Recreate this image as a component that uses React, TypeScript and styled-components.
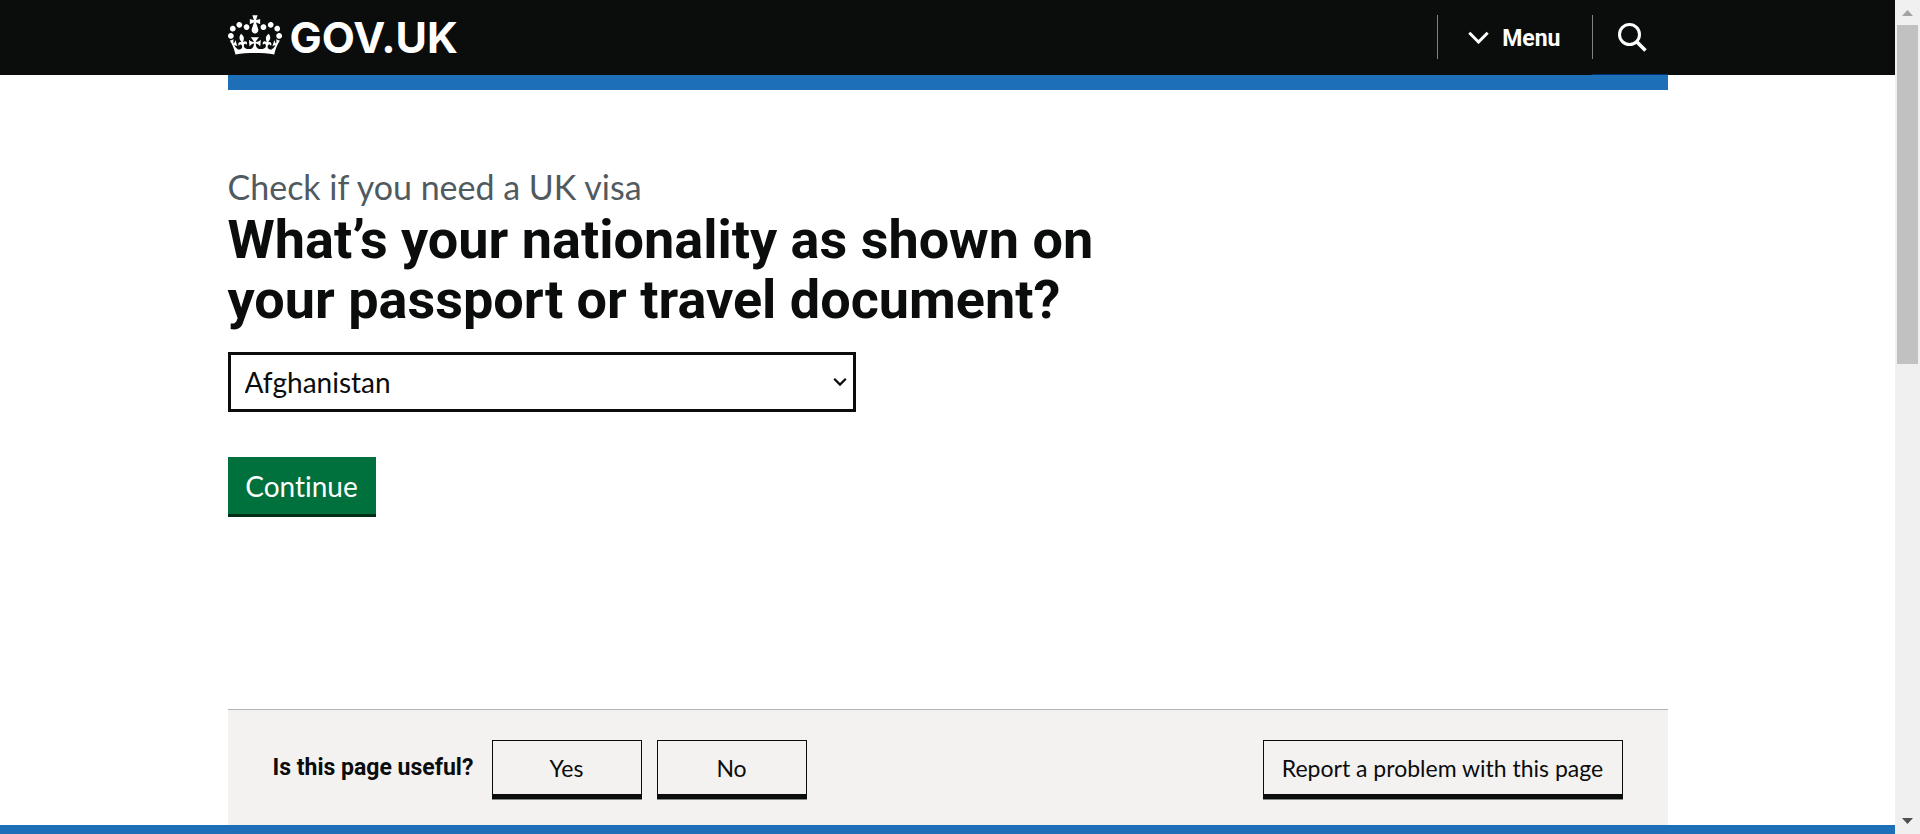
import React from "react";
import styled, { createGlobalStyle } from "styled-components";

const color = {
  ink: "#0b0c0c",
  blue: "#1d70b8",
  darkBlue: "#003078",
  green: "#00703c",
  greenShadow: "#002d18",
  grey: "#f3f2f1",
  midGrey: "#b1b4b6",
  secondary: "#505a5f",
};

const light = `Lato, "Open Sans", sans-serif`;
const bold = `Roboto, Arial, sans-serif`;

const GlobalStyle = createGlobalStyle`
  *, *::before, *::after { box-sizing: border-box; }
  body {
    margin: 0;
    background: #fff;
    color: ${color.ink};
    font-family: ${light};
    font-variant-ligatures: none;
  }
  button, select { font: inherit; color: inherit; border-radius: 0; }
`;

const Screen = styled.div`
  display: grid;
  grid-template-columns: minmax(0, 1fr) 25px;
  min-height: 100vh;
`;

const Page = styled.div`
  display: flex;
  flex-direction: column;
`;

const Container = styled.div`
  width: 100%;
  max-width: 1440px;
  margin: 0 auto;
`;

const Header = styled.header`
  background: ${color.ink};
  color: #fff;
`;

const HeaderInner = styled(Container)`
  display: flex;
  justify-content: space-between;
  height: 75px;
`;

const Logo = styled.a`
  display: flex;
  align-items: center;
  gap: 8px;
  padding-bottom: 5px;
  color: #fff;
  text-decoration: none;
  font: 700 43px/45px Inter, Arial, sans-serif;

  svg { display: block; fill: currentColor; }
  span { padding-top: 4px; }
`;

const HeaderNav = styled.nav`
  display: flex;
`;

const NavButton = styled.button<{ $underlined?: boolean }>`
  display: flex;
  align-items: center;
  padding: 0;
  border: 0;
  border-bottom: 1px solid ${(p) => (p.$underlined ? color.darkBlue : "transparent")};
  background: none;
  color: #fff;
  font: 700 23px/30px ${bold};
  cursor: pointer;

  &::before {
    content: "";
    width: 1px;
    height: 44px;
    background: #7f8283;
  }
  svg { display: block; fill: none; stroke: currentColor; }
  span { padding-top: 3px; }
`;

const MenuButton = styled(NavButton)`
  gap: 13px;
  padding-right: 31px;

  &::before { margin-right: 17px; }
`;

const SearchButton = styled(NavButton)`
  gap: 25px;
  padding-right: 21px;
`;

const BlueBar = styled(Container)`
  height: 15px;
  background: ${color.blue};
`;

const Main = styled.main`
  padding: 70px 0 195px;
`;

const Question = styled.form`
  display: flex;
  flex-direction: column;
  align-items: flex-start;
`;

const Caption = styled.span`
  padding: 4px 0 1px;
  color: ${color.secondary};
  font-size: 34px;
  line-height: 45px;
`;

const Heading = styled.h1`
  max-width: 920px;
  margin: 0 0 22px;
  font: 700 54px/60px ${bold};
`;

const SelectWrap = styled.div`
  display: grid;
  align-items: center;
  width: 628px;
  max-width: 100%;
  margin-bottom: 45px;

  > * { grid-area: 1 / 1; }
  svg {
    justify-self: end;
    margin-right: 9px;
    fill: none;
    stroke: ${color.ink};
    pointer-events: none;
  }
`;

const Select = styled.select`
  appearance: none;
  width: 100%;
  height: 60px;
  padding: 0 40px 0 14px;
  border: 3px solid ${color.ink};
  background: #fff;
  font-size: 28px;
`;

const ContinueButton = styled.button`
  min-width: 148px;
  height: 57px;
  padding: 0 16px;
  border: 0;
  background: ${color.green};
  box-shadow: 0 3px 0 ${color.greenShadow};
  color: #fff;
  font-size: 28px;
  line-height: 30px;
  cursor: pointer;
`;

const Feedback = styled(Container)`
  display: flex;
  align-items: flex-start;
  justify-content: space-between;
  flex: 1;
  padding: 30px 45px 26px;
  border-top: 1px solid ${color.midGrey};
  background: ${color.grey};
`;

const Useful = styled.div`
  display: flex;
  align-items: center;
  gap: 15px;
`;

const UsefulTitle = styled.h2`
  min-width: 204px;
  margin: 0;
  padding-bottom: 4px;
  font: 700 23px/30px ${bold};
`;

const FeedbackButton = styled.button<{ $wide?: boolean }>`
  width: ${(p) => (p.$wide ? "360px" : "150px")};
  height: 59px;
  padding: 0;
  border: 1px solid ${color.ink};
  border-bottom-width: 5px;
  background: ${color.grey};
  box-shadow: 0 1px 0 #858686;
  font-size: 23px;
  line-height: 30px;
  cursor: pointer;
`;

const Footer = styled.footer`
  height: 9px;
  background: ${color.blue};
`;

const Scrollbar = styled.div`
  display: flex;
  flex-direction: column;
  align-items: center;
  gap: 5px;
  padding: 10px 0;
  background: #f0f0f0;
`;

const Arrow = styled.svg<{ $active?: boolean }>`
  display: block;
  fill: ${(p) => (p.$active ? "#505050" : "#a3a3a3")};
`;

const Track = styled.div`
  flex: 1;
  width: 21px;
  padding-top: 4px;
`;

const Thumb = styled.div`
  height: 43%;
  background: #c1c1c1;
`;

const Crown = () => (
  <svg width="54" height="40" viewBox="0 0 132 97" aria-hidden="true">
    <path d="M25 30.2c3.5 1.5 7.7-.2 9.1-3.7 1.5-3.6-.2-7.8-3.9-9.2-3.6-1.4-7.6.3-9.1 3.9-1.4 3.5.3 7.5 3.9 9zM9 39.5c3.6 1.5 7.8-.2 9.2-3.7 1.5-3.6-.2-7.8-3.9-9.1-3.6-1.5-7.6.2-9.1 3.8-1.4 3.5.3 7.5 3.8 9zM4.4 57.2c3.5 1.5 7.7-.2 9.1-3.8 1.5-3.6-.2-7.7-3.9-9.1-3.5-1.5-7.6.3-9.1 3.8-1.4 3.5.3 7.6 3.9 9.1zm38.3-21.4c3.5 1.5 7.7-.2 9.1-3.8 1.5-3.6-.2-7.7-3.9-9.1-3.6-1.5-7.6.3-9.1 3.8-1.3 3.6.4 7.7 3.9 9.1zm64.4-5.6c-3.6 1.5-7.8-.2-9.1-3.7-1.5-3.6.2-7.8 3.8-9.2 3.6-1.4 7.7.3 9.2 3.9 1.3 3.5-.4 7.5-3.9 9zm15.9 9.3c-3.6 1.5-7.7-.2-9.1-3.7-1.5-3.6.2-7.8 3.7-9.1 3.6-1.5 7.7.2 9.2 3.8 1.5 3.5-.3 7.5-3.8 9zm4.7 17.7c-3.6 1.5-7.8-.2-9.2-3.8-1.5-3.6.2-7.7 3.9-9.1 3.6-1.5 7.7.3 9.2 3.8 1.3 3.5-.4 7.6-3.9 9.1zM89.3 35.8c-3.6 1.5-7.8-.2-9.2-3.8-1.4-3.6.2-7.7 3.9-9.1 3.6-1.5 7.7.3 9.2 3.8 1.4 3.6-.3 7.7-3.9 9.1zM69.7 17.7l8.9 4.7V9.3l-8.9 2.8c-.2-.3-.5-.6-.9-.9L72.4 0H59.6l3.5 11.2c-.3.3-.6.5-.9.9l-8.8-2.8v13.1l8.8-4.7c.3.3.6.7.9.9l-5 15.4v.1c-.2.8-.4 1.6-.4 2.4 0 4.1 3.1 7.5 7 8.1h.2c.3 0 .7.1 1 .1.4 0 .7 0 1-.1h.2c4-.6 7.1-4.1 7.1-8.1 0-.8-.1-1.7-.4-2.4V34l-5.1-15.4c.4-.2.7-.6 1-.9zM66 92.8c16.9 0 32.8 1.1 47.1 3.2 4-16.9 8.9-26.7 14-33.5l-9.6-3.4c1 4.9 1.1 7.2 0 10.2-1.5-1.4-3-4.3-4.2-8.7L108.6 76c2.8-2 5-3.2 7.5-3.3-4.4 9.4-10 11.9-13.6 11.2-4.3-.8-6.3-4.6-5.6-7.9 1-4.7 5.7-5.9 8-.5 4.3-8.7-3-11.4-7.6-8.8 7.1-7.2 7.9-13.5 2.1-21.1-8 6.1-8.1 12.3-4.5 20.8-4.7-5.4-12.1-2.5-9.5 6.2 3.4-5.2 7.9-2 7.2 3.1-.6 4.3-6.4 7.8-13.5 7.2-10.3-.9-10.9-8-11.2-13.8 2.5-.5 7.1 1.8 11 7.3L80.2 60c-4.1 4.4-8 5.3-12.3 5.4 1.4-4.4 8-11.6 8-11.6H55.5s6.4 7.2 7.9 11.6c-4.2-.1-8-1-12.3-5.4l1.4 16.4c3.9-5.5 8.5-7.7 10.9-7.3-.3 5.8-.9 12.8-11.1 13.8-7.2.6-12.9-2.9-13.5-7.2-.7-5 3.8-8.3 7.1-3.1 2.7-8.7-4.6-11.6-9.4-6.2 3.7-8.5 3.6-14.7-4.6-20.8-5.8 7.6-5 13.9 2.2 21.1-4.7-2.6-11.9.1-7.7 8.8 2.3-5.5 7.1-4.2 8.1.5.7 3.3-1.3 7.1-5.7 7.9-3.5.7-9-1.8-13.5-11.2 2.5.1 4.7 1.3 7.5 3.3l-4.7-15.4c-1.2 4.4-2.7 7.2-4.3 8.7-1.1-3-.9-5.3 0-10.2l-9.5 3.4c5 6.9 9.9 16.7 14 33.5 14.8-2.1 30.8-3.2 47.7-3.2z" />
  </svg>
);

export default function App() {
  return (
    <>
      <GlobalStyle />
      <Screen>
        <Page>
          <Header>
            <HeaderInner>
              <Logo href="#">
                <Crown />
                <span>GOV.UK</span>
              </Logo>
              <HeaderNav aria-label="Site">
                <MenuButton type="button">
                  <svg width="21" height="13" viewBox="0 0 21 13" strokeWidth="3" aria-hidden="true">
                    <path d="M1.3 1.8l9.2 9.2 9.2-9.2" />
                  </svg>
                  <span>Menu</span>
                </MenuButton>
                <SearchButton type="button" $underlined aria-label="Search">
                  <svg width="29" height="29" viewBox="0 0 29 29" strokeWidth="3" aria-hidden="true">
                    <circle cx="11.5" cy="11.5" r="10" />
                    <path d="M18.2 18.2l9.3 9.3" strokeWidth="3.6" />
                  </svg>
                </SearchButton>
              </HeaderNav>
            </HeaderInner>
          </Header>
          <BlueBar />

          <Container>
            <Main>
              <Question onSubmit={(e) => e.preventDefault()}>
                <Caption>Check if you need a UK visa</Caption>
                <Heading>
                  <label htmlFor="nationality">
                    What’s your nationality as shown on your passport or travel document?
                  </label>
                </Heading>
                <SelectWrap>
                  <Select id="nationality" defaultValue="afghanistan">
                    <option value="afghanistan">Afghanistan</option>
                  </Select>
                  <svg width="14" height="10" viewBox="0 0 14 10" strokeWidth="2.2" aria-hidden="true">
                    <path d="M1.2 1.8l5.8 5.8 5.8-5.8" />
                  </svg>
                </SelectWrap>
                <ContinueButton type="submit">Continue</ContinueButton>
              </Question>
            </Main>
          </Container>

          <Feedback>
            <Useful>
              <UsefulTitle>Is this page useful?</UsefulTitle>
              <FeedbackButton type="button">Yes</FeedbackButton>
              <FeedbackButton type="button">No</FeedbackButton>
            </Useful>
            <FeedbackButton type="button" $wide>
              Report a problem with this page
            </FeedbackButton>
          </Feedback>
          <Footer />
        </Page>

        <Scrollbar aria-hidden="true">
          <Arrow width="11" height="6" viewBox="0 0 11 6">
            <path d="M0 6L5.5 0L11 6z" />
          </Arrow>
          <Track>
            <Thumb />
          </Track>
          <Arrow $active width="11" height="6" viewBox="0 0 11 6">
            <path d="M0 0h11L5.5 6z" />
          </Arrow>
        </Scrollbar>
      </Screen>
    </>
  );
}
